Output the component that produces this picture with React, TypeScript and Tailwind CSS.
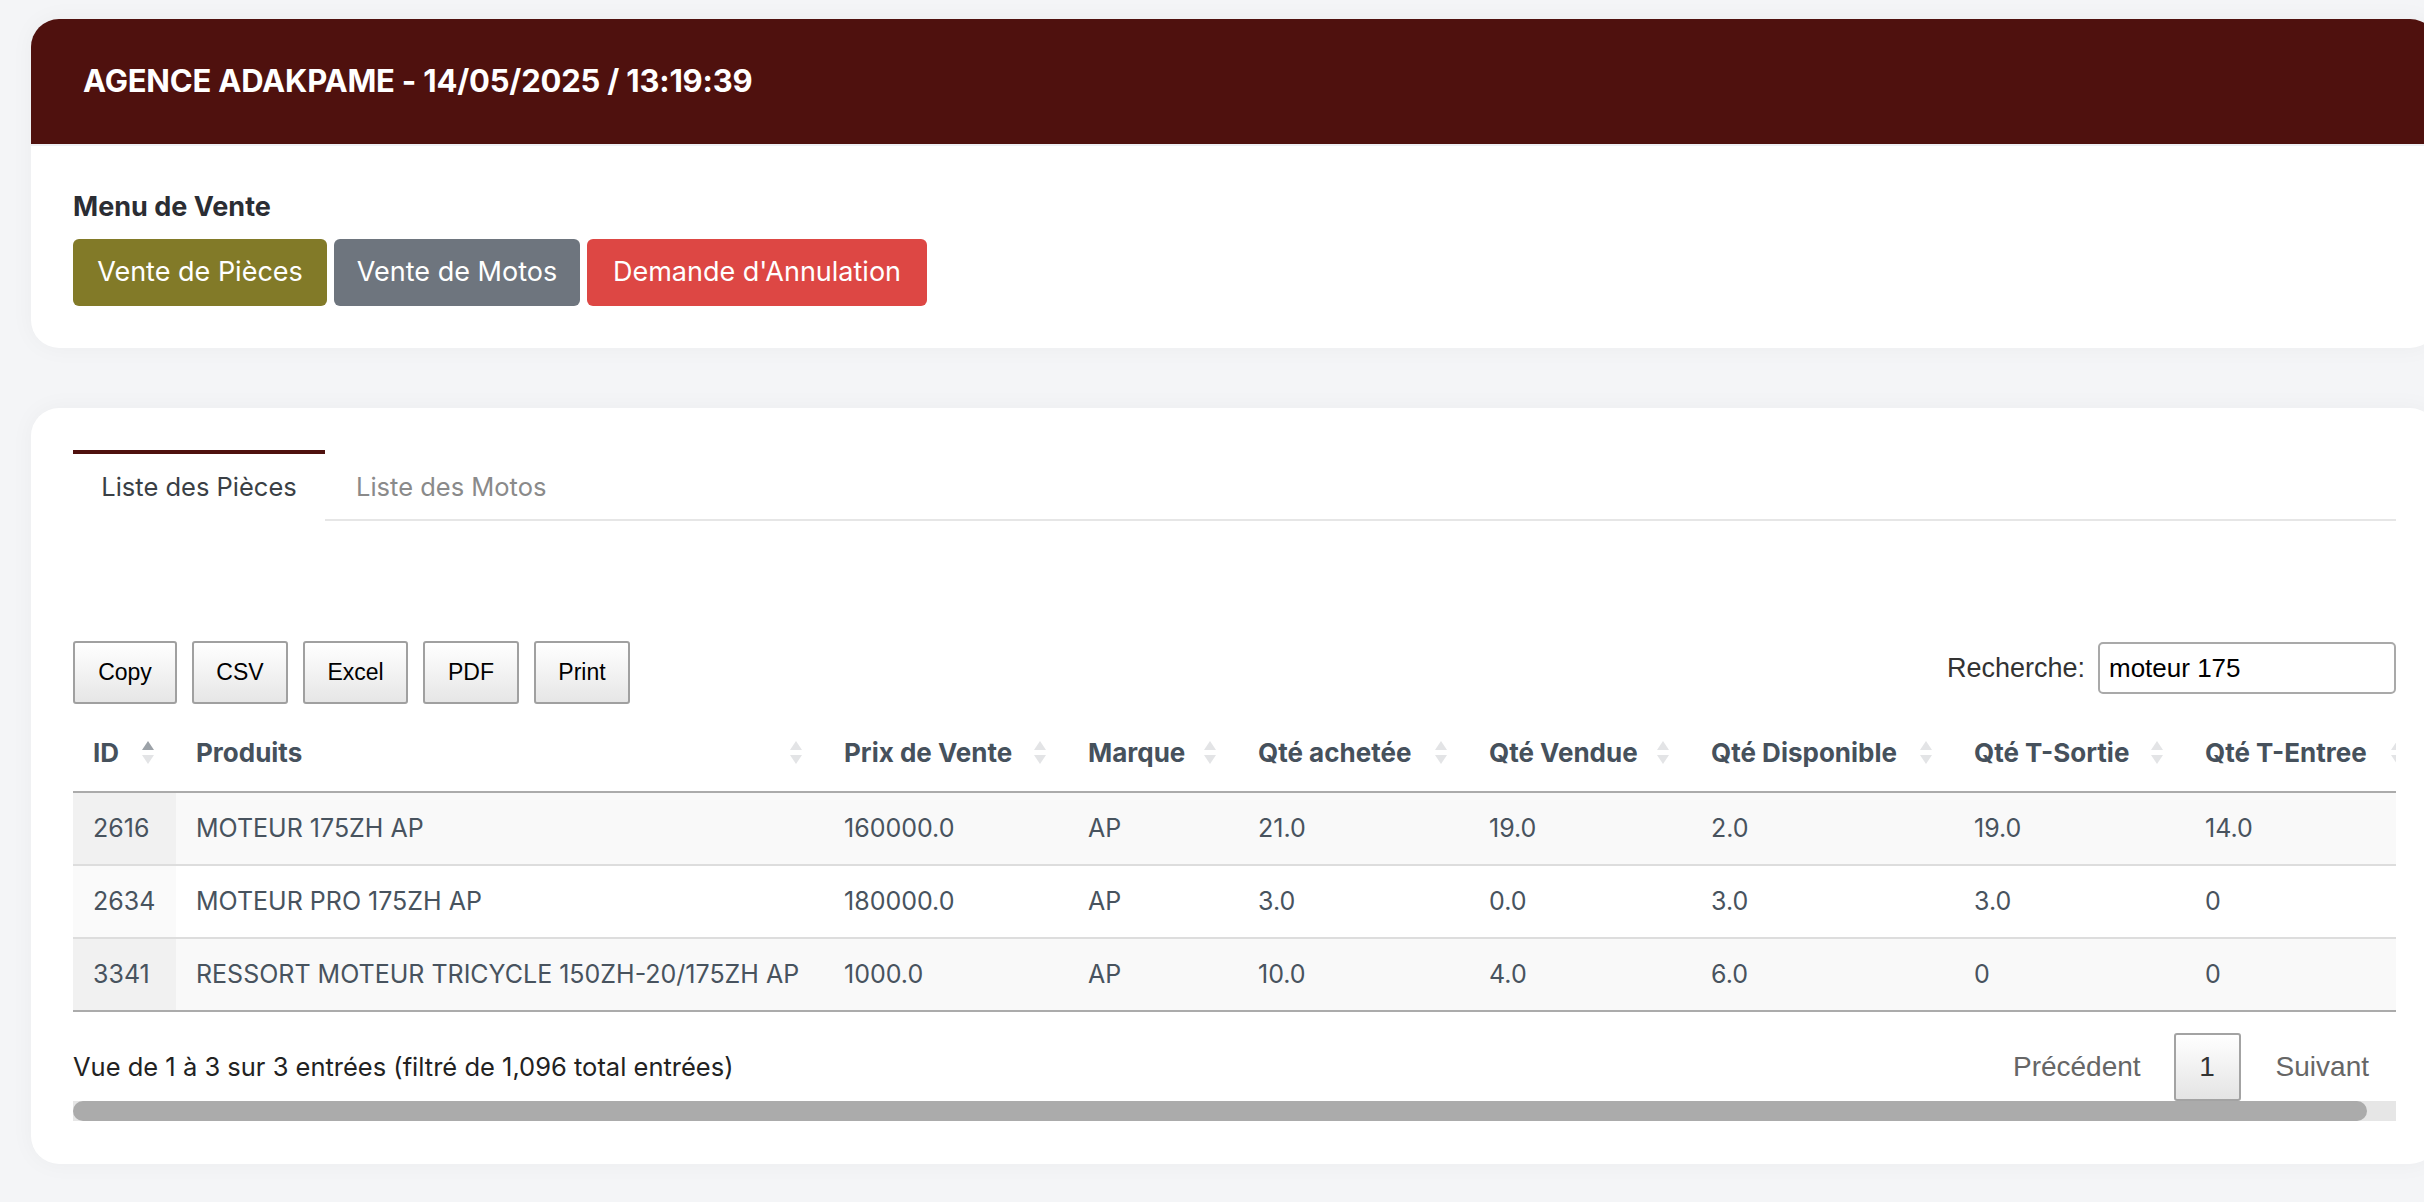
import React from "react";

const rubik = { fontFamily: "Inter, 'Noto Sans', sans-serif" };
const arial = { fontFamily: "'Liberation Sans', Arial, sans-serif" };

function SortIcon({ active }: { active?: boolean }) {
  return (
    <span className="flex flex-col items-center gap-[5px] shrink-0">
      <svg width="12" height="9" viewBox="0 0 12 9">
        <polygon points="6,0 12,9 0,9" fill={active ? "#9ca2a8" : "#e3e4e6"} />
      </svg>
      <svg width="12" height="9" viewBox="0 0 12 9">
        <polygon points="0,0 12,0 6,9" fill="#e3e4e6" />
      </svg>
    </span>
  );
}

const cols = [
  { name: "ID", w: 103 },
  { name: "Produits", w: 648 },
  { name: "Prix de Vente", w: 244 },
  { name: "Marque", w: 170 },
  { name: "Qté achetée", w: 231 },
  { name: "Qté Vendue", w: 222 },
  { name: "Qté Disponible", w: 263 },
  { name: "Qté T-Sortie", w: 231 },
  { name: "Qté T-Entree", w: 240 },
];

const rows = [
  ["2616", "MOTEUR 175ZH AP", "160000.0", "AP", "21.0", "19.0", "2.0", "19.0", "14.0"],
  ["2634", "MOTEUR PRO 175ZH AP", "180000.0", "AP", "3.0", "0.0", "3.0", "3.0", "0"],
  ["3341", "RESSORT MOTEUR TRICYCLE 150ZH-20/175ZH AP", "1000.0", "AP", "10.0", "4.0", "6.0", "0", "0"],
];

export default function App() {
  return (
    <div className="w-[2424px] h-[1202px] overflow-hidden bg-[#f4f5f7] pl-[31px] pt-[19px]" style={rubik}>
      {/* Card 1 */}
      <div className="w-[2407px] rounded-[28px] bg-white overflow-hidden shadow-[0_0_24px_rgba(0,0,0,0.04)]">
        <div className="h-[127px] bg-[#4f110e] border-b-2 border-[#eef0f4] flex items-center px-[52px]">
          <h1 className="text-white font-bold text-[31px] tracking-[-0.2px]">
            AGENCE ADAKPAME - 14/05/2025 / 13:19:39
          </h1>
        </div>
        <div className="px-[42px] pt-[45px] pb-[42px]">
          <div className="text-[27px] font-bold text-[#2b2d33] leading-[32px] mb-[16px]">Menu de Vente</div>
          <div className="flex gap-[7px]">
            <button className="h-[67px] w-[254px] rounded-[6px] bg-[#827a28] text-white text-[27px]">
              Vente de Pièces
            </button>
            <button className="h-[67px] w-[246px] rounded-[6px] bg-[#6e757e] text-white text-[27px]">
              Vente de Motos
            </button>
            <button className="h-[67px] w-[340px] rounded-[6px] bg-[#dd4744] text-white text-[27px]">
              Demande d'Annulation
            </button>
          </div>
        </div>
      </div>

      {/* Card 2 */}
      <div className="mt-[60px] w-[2407px] h-[756px] rounded-[28px] bg-white shadow-[0_0_24px_rgba(0,0,0,0.04)] px-[42px] pt-[42px]">
        {/* Tabs */}
        <div className="flex w-[2323px] border-b-2 border-[#e6e6e6] h-[71px]">
          <div className="h-[71px] w-[252px] -mb-[2px] border-t-4 border-[#4f110e] bg-white flex items-center justify-center text-[25.5px] text-[#3a3f45]">
            Liste des Pièces
          </div>
          <div className="h-[69px] pt-[6px] px-[31px] flex items-center text-[25.5px] text-[#8a8a8a]">Liste des Motos</div>
        </div>

        {/* DataTable wrapper */}
        <div className="w-[2323px] mt-[120px]">
          <div className="w-[2323px] overflow-hidden">
            <div className="w-[2352px]">
              <div className="flex items-start justify-between w-[2323px]">
                <div className="flex gap-[15px]" style={arial}>
                  {[
                    ["Copy", 104],
                    ["CSV", 96],
                    ["Excel", 105],
                    ["PDF", 96],
                    ["Print", 96],
                  ].map(([t, w]) => (
                    <button
                      key={t as string}
                      className="h-[63px] rounded-[3px] border-2 border-[#a0a0a0] bg-gradient-to-b from-white to-[#e6e6e6] text-[23px] text-black"
                      style={{ width: w as number }}
                    >
                      {t}
                    </button>
                  ))}
                </div>
                <div className="flex items-center gap-[13px] pt-[1px]" style={arial}>
                  <span className="text-[27px] text-[#333]">Recherche:</span>
                  <div className="h-[52px] w-[298px] rounded-[5px] border-2 border-[#a9a9a9] flex items-center px-[9px] text-[26px] text-black">
                    moteur 175
                  </div>
                </div>
              </div>

              {/* Table */}
              <div className="mt-[9px]">
                <div className="flex h-[80px] border-b-2 border-[#ababab]">
                  {cols.map((c, i) => (
                    <div
                      key={c.name}
                      className="flex items-center justify-between pl-[20px] pr-[22px] text-[26px] font-bold text-[#46515c]"
                      style={{ width: c.w }}
                    >
                      <span className="whitespace-nowrap">{c.name}</span>
                      <SortIcon active={i === 0} />
                    </div>
                  ))}
                </div>
                {rows.map((r, ri) => (
                  <div
                    key={ri}
                    className={
                      "flex h-[73px] border-b-2 " +
                      (ri === 2 ? "border-[#ababab]" : "border-[#dddddd]") +
                      (ri % 2 === 0 ? " bg-[#f9f9f9]" : " bg-white")
                    }
                  >
                    {r.map((v, ci) => (
                      <div
                        key={ci}
                        className={
                          "flex items-center pl-[20px] text-[25px] text-[#48535e] whitespace-nowrap" +
                          (ci === 0 ? (ri % 2 === 0 ? " bg-[#f1f1f1]" : " bg-[#fafafa]") : "")
                        }
                        style={{ width: cols[ci].w }}
                      >
                        {v}
                      </div>
                    ))}
                  </div>
                ))}
              </div>

              {/* Info + pagination */}
              <div className="flex items-center justify-between w-[2323px] mt-[21px] h-[68px]">
                <div className="text-[25.5px] text-[#222]">
                  Vue de 1 à 3 sur 3 entrées (filtré de 1,096 total entrées)
                </div>
                <div className="flex items-center mr-[27px] text-[28px] text-[#666]" style={arial}>
                  <span className="pr-[33px]">Précédent</span>
                  <span className="h-[68px] w-[67px] flex items-center justify-center rounded-[3px] border-2 border-[#a3a3a3] bg-gradient-to-b from-white to-[#e4e4e4] text-[#333]">
                    1
                  </span>
                  <span className="pl-[35px]">Suivant</span>
                </div>
              </div>
            </div>
          </div>
          {/* Fake scrollbar */}
          <div className="h-[20px] w-[2323px] bg-[#e6e6e6]">
            <div className="h-[20px] w-[2294px] rounded-full bg-[#ababab]" />
          </div>
        </div>
      </div>
    </div>
  );
}
